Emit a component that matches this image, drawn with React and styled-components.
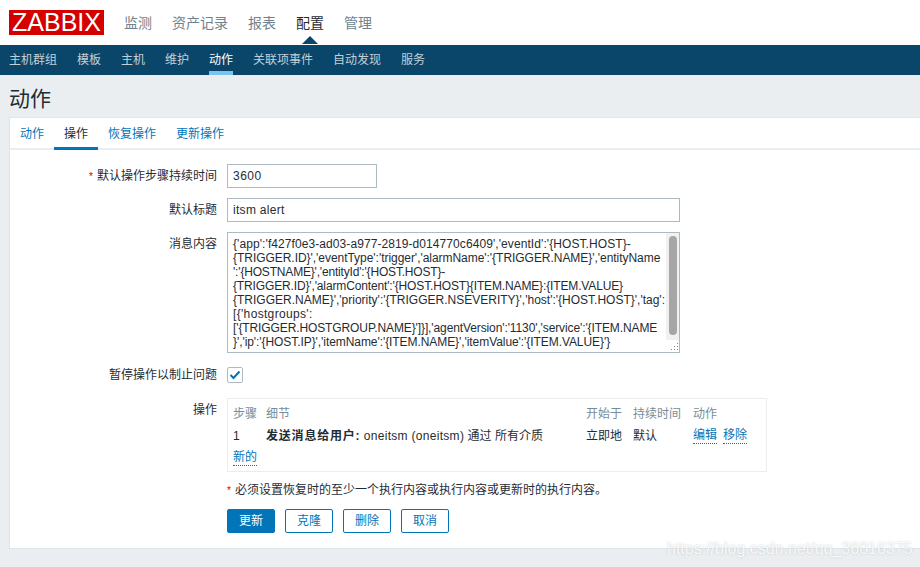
import React from "react";
import styled, { createGlobalStyle } from "styled-components";

const Global = createGlobalStyle`
  html, body { margin: 0; padding: 0; width: 920px; height: 567px; overflow: hidden; background: #ebeef0; }
  body { font-family: "Liberation Sans", Arial, "Noto Sans CJK SC", sans-serif; font-size: 12px; color: #1f2c33; }
  * { box-sizing: border-box; }
`;

const Page = styled.div`position: relative; width: 920px; height: 567px; overflow: hidden;`;
const TopBar = styled.header`height: 45px; background: #fff; display: flex; align-items: flex-start; padding: 10px 0 0 9px;`;
const Logo = styled.div`
  width: 95px; height: 25px; background: #d40000; color: #fff; font-size: 25px; line-height: 25px; text-align: center; white-space: nowrap;
`;
const TopNav = styled.nav`display: flex; gap: 20px; margin-left: 20px; height: 35px; align-items: center; margin-top: -5px;`;
const TopItem = styled.a`
  position: relative; font-size: 14px; line-height: 20px; color: ${p => p.$active ? "#1f2c33" : "#6f838e"};
  ${p => p.$active && `&::after { content: ""; position: absolute; left: 6px; bottom: -11px; border: 8px solid transparent; border-top: 0; border-bottom: 8px solid #0a466a; }`}
`;
const SubBar = styled.nav`height: 30px; background: #0a466a; display: flex; gap: 20px; padding-left: 9px;`;
const SubItem = styled.a`
  height: 30px; line-height: 31px; color: ${p => p.$active ? "#fff" : "#c3d0d8"};
  ${p => p.$active && `border-bottom: 4px solid #7bc3ee;`}
`;
const Title = styled.h1`margin: 0; height: 42px; padding: 10px 0 0 9px; font-size: 21px; line-height: 27px; font-weight: 400; color: #1f2c33;`;
const Panel = styled.main`margin-left: 9px; height: 432px; background: #fff; border: 1px solid #dfe4e7; border-right: 0; border-top-color: #e3e7ea;`;
const Tabs = styled.div`display: flex; height: 32px; border-bottom: 2px solid #ebeef0;`;
const Tab = styled.a`
  height: 32px; padding: 0 10px; line-height: 32px; color: ${p => p.$active ? "#1f2c33" : "#0275b8"};
  ${p => p.$active && `border-bottom: 3px solid #0275b8;`}
`;
const Form = styled.div`display: grid; grid-template-columns: 207px 1fr; column-gap: 10px; padding-top: 14px;`;
const Label = styled.label`text-align: right; line-height: 24px; color: #1f2c33; height: 24px; white-space: nowrap;`;
const Star = styled.span`color: #d40000; font-size: 10px; margin-right: 4px;`;
const Field = styled.div`min-height: 24px; margin-bottom: 10px;`;
const Input = styled.div`
  width: ${p => p.$w}px; height: 24px; border: 1px solid #acbbc2; padding: 0 5px; line-height: 22px; color: #1f2c33; background: #fff; letter-spacing: ${p => p.$ls}px;
`;
const AreaBox = styled.div`
  position: relative; width: 453px; height: 121px; border: 1px solid #acbbc2; background: #fff; display: flex; overflow: hidden;
`;
const AreaText = styled.div`width: 438px; padding: 4px 0 0 5px; color: #1f2c33;`;
const AreaLine = styled.div`height: 14px; line-height: 14px; white-space: nowrap; letter-spacing: ${p => p.$ls}px;`;
const Scroll = styled.div`width: 13px; height: 107px; background: #f1f1f1; flex: none; padding: 3px 2px 0 3px;`;
const Thumb = styled.div`width: 8px; height: 99px; background: #a6a6a6; border-radius: 4px;`;
const Grip = styled.svg`position: absolute; right: 0; bottom: 0;`;
const CheckBox = styled.div`
  width: 16px; height: 16px; border: 1px solid #acbbc2; border-radius: 2px; display: flex; align-items: center; justify-content: center; margin: 4px 0 0; background: #fff;
`;
const CheckField = styled.div`height: 24px; margin-bottom: 11px;`;
const OpsBox = styled.div`width: 540px; height: 74px; border: 1px solid #ebeef0; padding: 0 5px; margin-bottom: 10px;`;
const OpsTable = styled.div`
  display: grid; grid-template-columns: 33px 320px 47px 60px 1fr; grid-auto-rows: 22px; padding-top: 4px;
`;
const Head = styled.div`line-height: 22px; color: #768d99; white-space: nowrap;`;
const Cell = styled.div`line-height: 22px; white-space: nowrap; color: #1f2c33;`;
const Strong = styled.b`letter-spacing: 0.8px;`;
const Latin = styled.span`letter-spacing: 0.3px;`;
const Links = styled.div`display: flex; gap: 6px; line-height: 22px;`;
const DotLink = styled.a`color: #0275b8; border-bottom: 1px dotted #0275b8; line-height: 15px; height: 16px; display: inline-block; margin-top: 3px;`;
const Note = styled.div`grid-column: 2; height: 16px; line-height: 16px; margin-bottom: 11px;`;
const Buttons = styled.div`grid-column: 2; display: flex; gap: 10px;`;
const Button = styled.button`
  width: 48px; height: 24px; padding: 0; border: 1px solid #0275b8; border-radius: 2px; font: inherit; line-height: 22px;
  background: ${p => p.$primary ? "#0275b8" : "#fff"}; color: ${p => p.$primary ? "#fff" : "#0275b8"};
`;
const Watermark = styled.div`
  position: absolute; left: 667px; top: 539px; font-size: 16px; line-height: 20px; color: rgba(255,255,255,.85);
  text-shadow: 0 0 2px rgba(170,180,185,.7);
`;

const lines = [
  ["{'app':'f427f0e3-ad03-a977-2819-d014770c6409','eventId':'{HOST.HOST}-", 0.08],
  ["{TRIGGER.ID}','eventType':'trigger','alarmName':'{TRIGGER.NAME}','entityName", -0.04],
  ["':'{HOSTNAME}','entityId':'{HOST.HOST}-", -0.18],
  ["{TRIGGER.ID}','alarmContent':'{HOST.HOST}{ITEM.NAME}:{ITEM.VALUE}", -0.14],
  ["{TRIGGER.NAME}','priority':'{TRIGGER.NSEVERITY}','host':'{HOST.HOST}','tag':", 0],
  ["[{'hostgroups':", 0.33],
  ["['{TRIGGER.HOSTGROUP.NAME}']}],'agentVersion':'1130','service':'{ITEM.NAME", -0.11],
  ["}','ip':'{HOST.IP}','itemName':'{ITEM.NAME}','itemValue':'{ITEM.VALUE}'}", -0.07],
];

export default function App() {
  return (
    <Page>
      <Global />
      <TopBar>
        <Logo>ZABBIX</Logo>
        <TopNav>
          <TopItem>监测</TopItem>
          <TopItem>资产记录</TopItem>
          <TopItem>报表</TopItem>
          <TopItem $active>配置</TopItem>
          <TopItem>管理</TopItem>
        </TopNav>
      </TopBar>
      <SubBar>
        <SubItem>主机群组</SubItem>
        <SubItem>模板</SubItem>
        <SubItem>主机</SubItem>
        <SubItem>维护</SubItem>
        <SubItem $active>动作</SubItem>
        <SubItem>关联项事件</SubItem>
        <SubItem>自动发现</SubItem>
        <SubItem>服务</SubItem>
      </SubBar>
      <Title>动作</Title>
      <Panel>
        <Tabs>
          <Tab>动作</Tab>
          <Tab $active>操作</Tab>
          <Tab>恢复操作</Tab>
          <Tab>更新操作</Tab>
        </Tabs>
        <Form>
          <Label><Star>*</Star>默认操作步骤持续时间</Label>
          <Field><Input $w={150} $ls={0.5}>3600</Input></Field>
          <Label>默认标题</Label>
          <Field><Input $w={453} $ls={0.3}>itsm alert</Input></Field>
          <Label>消息内容</Label>
          <Field>
            <AreaBox>
              <AreaText>
                {lines.map(([text, ls]) => <AreaLine key={text} $ls={ls}>{text}</AreaLine>)}
              </AreaText>
              <Scroll><Thumb /></Scroll>
              <Grip width="11" height="11" viewBox="0 0 11 11">
                <path d="M9 2h1v1H9zM6 5h1v1H6zM9 5h1v1H9zM3 8h1v1H3zM6 8h1v1H6zM9 8h1v1H9z" fill="#8a8a8a" />
              </Grip>
            </AreaBox>
          </Field>
          <Label>暂停操作以制止问题</Label>
          <CheckField>
            <CheckBox>
              <svg width="12" height="10" viewBox="0 0 12 10">
                <path d="M1.5 5l3 3 6-6.5" fill="none" stroke="#0275b8" strokeWidth="2" />
              </svg>
            </CheckBox>
          </CheckField>
          <Label>操作</Label>
          <OpsBox>
            <OpsTable>
              <Head>步骤</Head><Head>细节</Head><Head>开始于</Head><Head>持续时间</Head><Head>动作</Head>
              <Cell>1</Cell>
              <Cell><Strong>发送消息给用户:</Strong> <Latin>oneitsm (oneitsm)</Latin> 通过 所有介质</Cell>
              <Cell>立即地</Cell>
              <Cell>默认</Cell>
              <Links><DotLink>编辑</DotLink><DotLink>移除</DotLink></Links>
              <Links><DotLink>新的</DotLink></Links>
            </OpsTable>
          </OpsBox>
          <Note><Star>*</Star>必须设置恢复时的至少一个执行内容或执行内容或更新时的执行内容。</Note>
          <Buttons>
            <Button $primary>更新</Button>
            <Button>克隆</Button>
            <Button>删除</Button>
            <Button>取消</Button>
          </Buttons>
        </Form>
      </Panel>
      <Watermark>https://blog.csdn.net/qq_36016375</Watermark>
    </Page>
  );
}
